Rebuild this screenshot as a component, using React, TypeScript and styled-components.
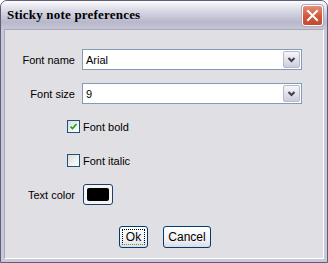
import React from 'react'
import styled, { createGlobalStyle } from 'styled-components'

const GlobalStyle = createGlobalStyle`
    html, body {
        margin: 0;
        padding: 0;
        background: #ffffff;
    }
    body {
        font-family: 'Liberation Sans', Arial, sans-serif;
        font-size: 11px;
        color: #000000;
    }
`

const Window = styled.div`
    width: 328px;
    height: 263px;
    box-sizing: border-box;
    display: flex;
    flex-direction: column;
    background: #c9c8d8;
    border: 1px solid #5f5d7c;
    border-radius: 7px 7px 0 0;
    overflow: hidden;
`

const TitleBar = styled.div`
    height: 28px;
    flex: none;
    display: flex;
    align-items: center;
    justify-content: space-between;
    padding: 0 4px 0 6px;
    background: linear-gradient(180deg, #ffffff 0%, #eeeef4 12%, #d4d4e2 40%, #b8b8cc 75%, #c6c6d6 100%);
`

const Title = styled.div`
    font-family: 'Liberation Serif', 'Times New Roman', serif;
    font-weight: bold;
    font-size: 13px;
    color: #000000;
    letter-spacing: 0.2px;
`

const CloseButton = styled.div`
    width: 21px;
    height: 21px;
    box-sizing: border-box;
    border: 1px solid #ffffff;
    border-radius: 3px;
    background: linear-gradient(180deg, #e4917c 0%, #d1563b 55%, #c04a34 100%);
    display: flex;
    align-items: center;
    justify-content: center;
    box-shadow: 0 0 0 1px #b9a8ad;
`

const Body = styled.div`
    flex: 1;
    margin: 0 3px 3px 3px;
    background: #e0dfe3;
    border-top: 1px solid #a8a7bc;
    border-left: 1px solid #a8a7bc;
    border-right: 1px solid #ffffff;
    border-bottom: 1px solid #ffffff;
    display: flex;
    flex-direction: column;
    padding-top: 19px;
`

const FieldRow = styled.div<{ $top: number; $height: number }>`
    display: flex;
    align-items: center;
    margin-top: ${(p) => p.$top}px;
    height: ${(p) => p.$height}px;
`

const Label = styled.div`
    width: 60px;
    margin-left: 10px;
    text-align: right;
    white-space: nowrap;
    margin-right: 7px;
`

const Combo = styled.div`
    width: 220px;
    height: 21px;
    box-sizing: border-box;
    border: 1px solid #7f9db9;
    background: #ffffff;
    display: flex;
    align-items: center;
`

const ComboText = styled.div`
    flex: 1;
    padding-left: 3px;
`

const DropButton = styled.div`
    width: 17px;
    height: 17px;
    margin-right: 1px;
    box-sizing: border-box;
    border: 1px solid #b9b8cc;
    border-radius: 2px;
    background: linear-gradient(180deg, #f6f6fa 0%, #dedde8 60%, #cdccdb 100%);
    display: flex;
    align-items: center;
    justify-content: center;
`

const CheckRow = styled.label<{ $top: number }>`
    display: flex;
    align-items: center;
    margin-top: ${(p) => p.$top}px;
    height: 13px;
    padding-left: 62px;
`

const CheckBox = styled.div`
    width: 13px;
    height: 13px;
    box-sizing: border-box;
    border: 1px solid #1c5180;
    background: linear-gradient(135deg, #dcdcd6 0%, #f2f2ee 60%, #ffffff 100%);
    display: flex;
    align-items: center;
    justify-content: center;
    margin-right: 3px;
`

const ColorButton = styled.div<{ $color: string }>`
    width: 30px;
    height: 21px;
    box-sizing: border-box;
    border: 1px solid #1c3f6e;
    border-radius: 3px;
    background: #f4f4f2;
    padding: 3px;
    margin-left: 1px;

    &::after {
        content: '';
        display: block;
        width: 100%;
        height: 100%;
        border-radius: 2px;
        background: ${(p) => p.$color};
    }
`

const Buttons = styled.div`
    display: flex;
    justify-content: center;
    gap: 15px;
    margin-top: 21px;
    padding-left: 2px;
`

const Button = styled.div<{ $width: number; $focused?: boolean }>`
    width: ${(p) => p.$width}px;
    height: 22px;
    box-sizing: border-box;
    border: 1px solid #003c74;
    border-radius: 3px;
    background: linear-gradient(180deg, #ffffff 0%, #f3f3f6 60%, #dcdce6 100%);
    display: flex;
    align-items: center;
    justify-content: center;
    position: relative;
    font-size: 12px;

    ${(p) =>
        p.$focused &&
        `
        &::before {
            content: '';
            position: absolute;
            inset: 2px;
            border: 1px dotted #000000;
            border-bottom-color: #8a8a30;
        }
    `}
`

const Chevron = () => (
    <svg width="9" height="6" viewBox="0 0 9 6">
        <path d="M1.5 1 L4.5 4 L7.5 1" stroke="#3f3f4c" strokeWidth="2" fill="none" />
    </svg>
)

const App: React.FC = () => {
    return (
        <>
            <GlobalStyle />
            <Window>
                <TitleBar>
                    <Title>Sticky note preferences</Title>
                    <CloseButton>
                        <svg width="13" height="13" viewBox="0 0 13 13">
                            <path d="M2 2 L11 11 M11 2 L2 11" stroke="#ffffff" strokeWidth="2" strokeLinecap="square" />
                        </svg>
                    </CloseButton>
                </TitleBar>
                <Body>
                    <FieldRow $top={0} $height={21}>
                        <Label>Font name</Label>
                        <Combo>
                            <ComboText>Arial</ComboText>
                            <DropButton>
                                <Chevron />
                            </DropButton>
                        </Combo>
                    </FieldRow>
                    <FieldRow $top={13} $height={21}>
                        <Label>Font size</Label>
                        <Combo>
                            <ComboText>9</ComboText>
                            <DropButton>
                                <Chevron />
                            </DropButton>
                        </Combo>
                    </FieldRow>
                    <CheckRow $top={16}>
                        <CheckBox>
                            <svg width="7" height="7" viewBox="0 0 7 7">
                                <path d="M0.5 3.5 L2.5 5.5 L6.5 1" stroke="#21a121" strokeWidth="1.7" fill="none" />
                            </svg>
                        </CheckBox>
                        Font bold
                    </CheckRow>
                    <CheckRow $top={21}>
                        <CheckBox />
                        Font italic
                    </CheckRow>
                    <FieldRow $top={17} $height={21}>
                        <Label>Text color</Label>
                        <ColorButton $color="#000000" />
                    </FieldRow>
                    <Buttons>
                        <Button $width={29} $focused>
                            Ok
                        </Button>
                        <Button $width={48}>Cancel</Button>
                    </Buttons>
                </Body>
            </Window>
        </>
    )
}

export default App
